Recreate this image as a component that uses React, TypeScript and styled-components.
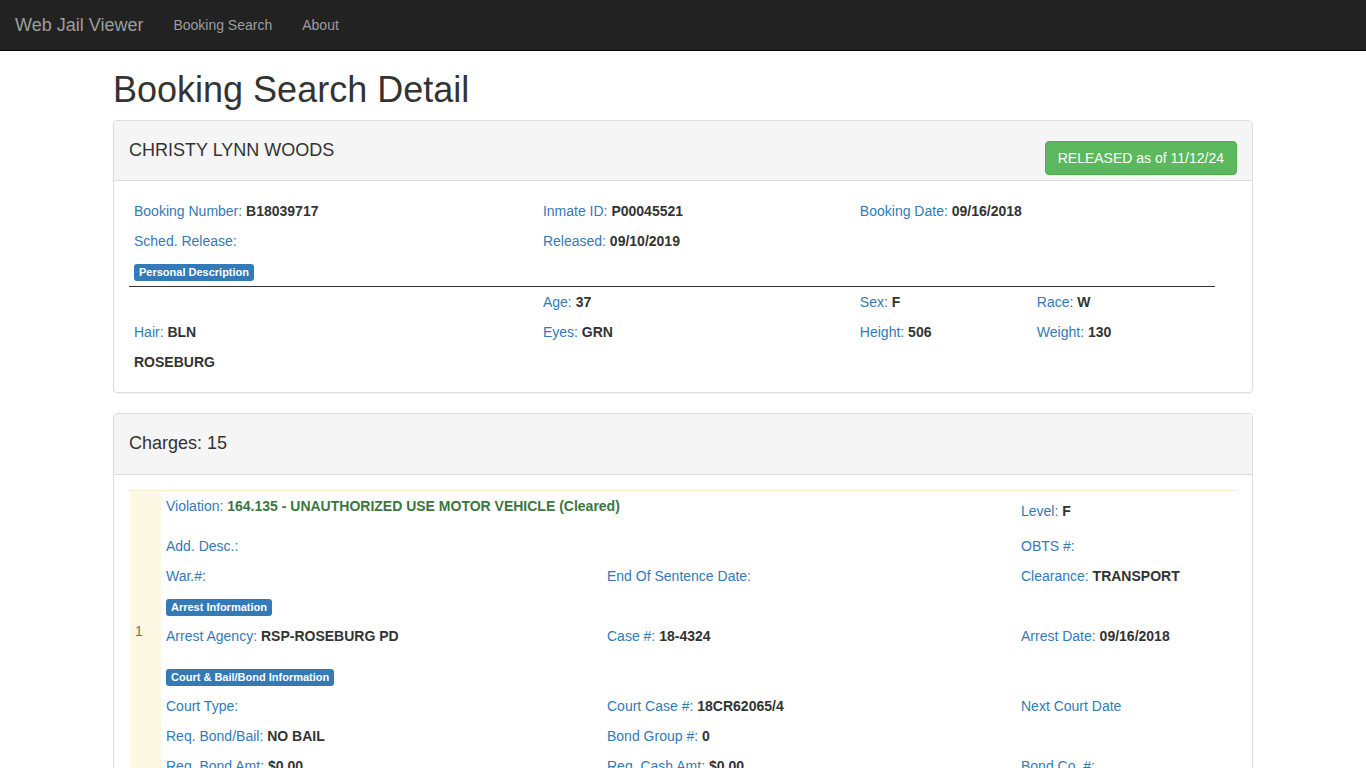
import React from "react";
import styled, { createGlobalStyle } from "styled-components";

const GlobalStyle = createGlobalStyle`
  *, *::before, *::after { box-sizing: border-box; }
  body {
    margin: 0;
    background: #fff;
    color: #333;
    font-family: "Helvetica Neue", Arial, "Liberation Sans", sans-serif;
    font-size: 14px;
    line-height: 20px;
  }
`;

const Navbar = styled.nav`
  display: flex;
  align-items: center;
  background: #222;
  border-bottom: 1px solid #080808;
`;

const NavLink = styled.a<{ $brand?: boolean }>`
  padding: 15px;
  color: #9d9d9d;
  font-size: ${(p) => (p.$brand ? 18 : 14)}px;
  line-height: 20px;
  text-decoration: none;
`;

const Container = styled.main`
  max-width: 1170px;
  margin: 0 auto;
  padding: 0 15px;
`;

const PageTitle = styled.h1`
  margin: 19px 0 10px;
  font-size: 36px;
  font-weight: 500;
  line-height: 40px;
`;

const Panel = styled.section`
  margin-bottom: 20px;
  border: 1px solid #ddd;
  border-radius: 4px;
  box-shadow: 0 1px 1px rgba(0, 0, 0, 0.05);
`;

const PanelHeading = styled.header<{ $compact?: boolean }>`
  display: flex;
  justify-content: space-between;
  align-items: flex-start;
  height: ${(p) => (p.$compact ? 60 : 61)}px;
  padding: 20px 15px 0;
  background: #f5f5f5;
  border-bottom: 1px solid #ddd;
  border-radius: 3px 3px 0 0;
`;

const PanelTitle = styled.h4`
  margin: 0;
  font-size: 18px;
  font-weight: 500;
  line-height: 18px;
`;

const PanelBody = styled.div`
  padding: 15px;
`;

const StatusButton = styled.button`
  padding: 6px 12px;
  border: 1px solid #4cae4c;
  border-radius: 4px;
  background: #5cb85c;
  color: #fff;
  font: inherit;
  white-space: nowrap;
  cursor: pointer;
`;

const Table = styled.table<{ $narrow?: boolean }>`
  width: ${(p) => (p.$narrow ? "98%" : "100%")};
  border-spacing: 0;
`;

const Cell = styled.td`
  padding: 5px;
  text-align: left;
`;

const DividedCell = styled(Cell)`
  border-bottom: 1px solid #333;
`;

const SpacedCell = styled(Cell)`
  padding-top: 15px;
`;

const ChargesTable = styled(Table)`
  border-top: 1px solid #faebcc;
`;

const ViolationCell = styled(Cell)`
  height: 40px;
  vertical-align: top;
`;

const NumberCell = styled(Cell)`
  padding-bottom: 15px;
  border-left: 1px solid #fff;
  background: #fcf8e3;
  color: #8a6d3b;
`;

const Label = styled.span`
  color: #337ab7;
`;

const Value = styled.strong<{ $cleared?: boolean }>`
  color: ${(p) => (p.$cleared ? "#3c763d" : "#333")};
`;

const Badge = styled.span`
  display: block;
  width: fit-content;
  margin-top: 3px;
  padding: 3px 5px;
  border-radius: 3px;
  background: #337ab7;
  color: #fff;
  font-size: 11px;
  font-weight: 700;
  line-height: 11px;
  white-space: nowrap;
`;

function Field({ label, value, cleared }: { label: string; value?: string; cleared?: boolean }) {
  return (
    <>
      <Label>{label}</Label> {value && <Value $cleared={cleared}>{value}</Value>}
    </>
  );
}

export default function App() {
  return (
    <>
      <GlobalStyle />
      <Navbar>
        <NavLink href="#home" $brand>Web Jail Viewer</NavLink>
        <NavLink href="#search">Booking Search</NavLink>
        <NavLink href="#about">About</NavLink>
      </Navbar>
      <Container>
        <PageTitle>Booking Search Detail</PageTitle>

        <Panel>
          <PanelHeading $compact>
            <PanelTitle>CHRISTY LYNN WOODS</PanelTitle>
            <StatusButton type="button">RELEASED as of 11/12/24</StatusButton>
          </PanelHeading>
          <PanelBody>
            <Table $narrow>
              <colgroup>
                <col width="409" />
                <col width="317" />
                <col width="177" />
                <col width="183" />
              </colgroup>
              <tbody>
                <tr>
                  <Cell><Field label="Booking Number:" value="B18039717" /></Cell>
                  <Cell><Field label="Inmate ID:" value="P00045521" /></Cell>
                  <Cell colSpan={2}><Field label="Booking Date:" value="09/16/2018" /></Cell>
                </tr>
                <tr>
                  <Cell><Field label="Sched. Release:" /></Cell>
                  <Cell colSpan={3}><Field label="Released:" value="09/10/2019" /></Cell>
                </tr>
                <tr>
                  <DividedCell colSpan={4}><Badge>Personal Description</Badge></DividedCell>
                </tr>
                <tr>
                  <Cell />
                  <Cell><Field label="Age:" value="37" /></Cell>
                  <Cell><Field label="Sex:" value="F" /></Cell>
                  <Cell><Field label="Race:" value="W" /></Cell>
                </tr>
                <tr>
                  <Cell><Field label="Hair:" value="BLN" /></Cell>
                  <Cell><Field label="Eyes:" value="GRN" /></Cell>
                  <Cell><Field label="Height:" value="506" /></Cell>
                  <Cell><Field label="Weight:" value="130" /></Cell>
                </tr>
                <tr>
                  <Cell colSpan={4}><Value>ROSEBURG</Value></Cell>
                </tr>
              </tbody>
            </Table>
          </PanelBody>
        </Panel>

        <Panel>
          <PanelHeading>
            <PanelTitle>Charges: 15</PanelTitle>
          </PanelHeading>
          <PanelBody>
            <ChargesTable>
              <colgroup>
                <col width="32" />
                <col width="441" />
                <col width="414" />
                <col width="221" />
              </colgroup>
              <tbody>
                <tr>
                  <NumberCell rowSpan={9}>1</NumberCell>
                  <ViolationCell colSpan={2}>
                    <Field label="Violation:" value="164.135 - UNAUTHORIZED USE MOTOR VEHICLE (Cleared)" cleared />
                  </ViolationCell>
                  <Cell><Field label="Level:" value="F" /></Cell>
                </tr>
                <tr>
                  <Cell colSpan={2}><Field label="Add. Desc.:" /></Cell>
                  <Cell><Field label="OBTS #:" /></Cell>
                </tr>
                <tr>
                  <Cell><Field label="War.#:" /></Cell>
                  <Cell><Field label="End Of Sentence Date:" /></Cell>
                  <Cell><Field label="Clearance:" value="TRANSPORT" /></Cell>
                </tr>
                <tr>
                  <Cell colSpan={3}><Badge>Arrest Information</Badge></Cell>
                </tr>
                <tr>
                  <Cell><Field label="Arrest Agency:" value="RSP-ROSEBURG PD" /></Cell>
                  <Cell><Field label="Case #:" value="18-4324" /></Cell>
                  <Cell><Field label="Arrest Date:" value="09/16/2018" /></Cell>
                </tr>
                <tr>
                  <SpacedCell colSpan={3}><Badge>Court &amp; Bail/Bond Information</Badge></SpacedCell>
                </tr>
                <tr>
                  <Cell><Field label="Court Type:" /></Cell>
                  <Cell><Field label="Court Case #:" value="18CR62065/4" /></Cell>
                  <Cell><Field label="Next Court Date" /></Cell>
                </tr>
                <tr>
                  <Cell><Field label="Req. Bond/Bail:" value="NO BAIL" /></Cell>
                  <Cell colSpan={2}><Field label="Bond Group #:" value="0" /></Cell>
                </tr>
                <tr>
                  <Cell><Field label="Req. Bond Amt:" value="$0.00" /></Cell>
                  <Cell><Field label="Req. Cash Amt:" value="$0.00" /></Cell>
                  <Cell><Field label="Bond Co. #:" /></Cell>
                </tr>
              </tbody>
            </ChargesTable>
          </PanelBody>
        </Panel>
      </Container>
    </>
  );
}
